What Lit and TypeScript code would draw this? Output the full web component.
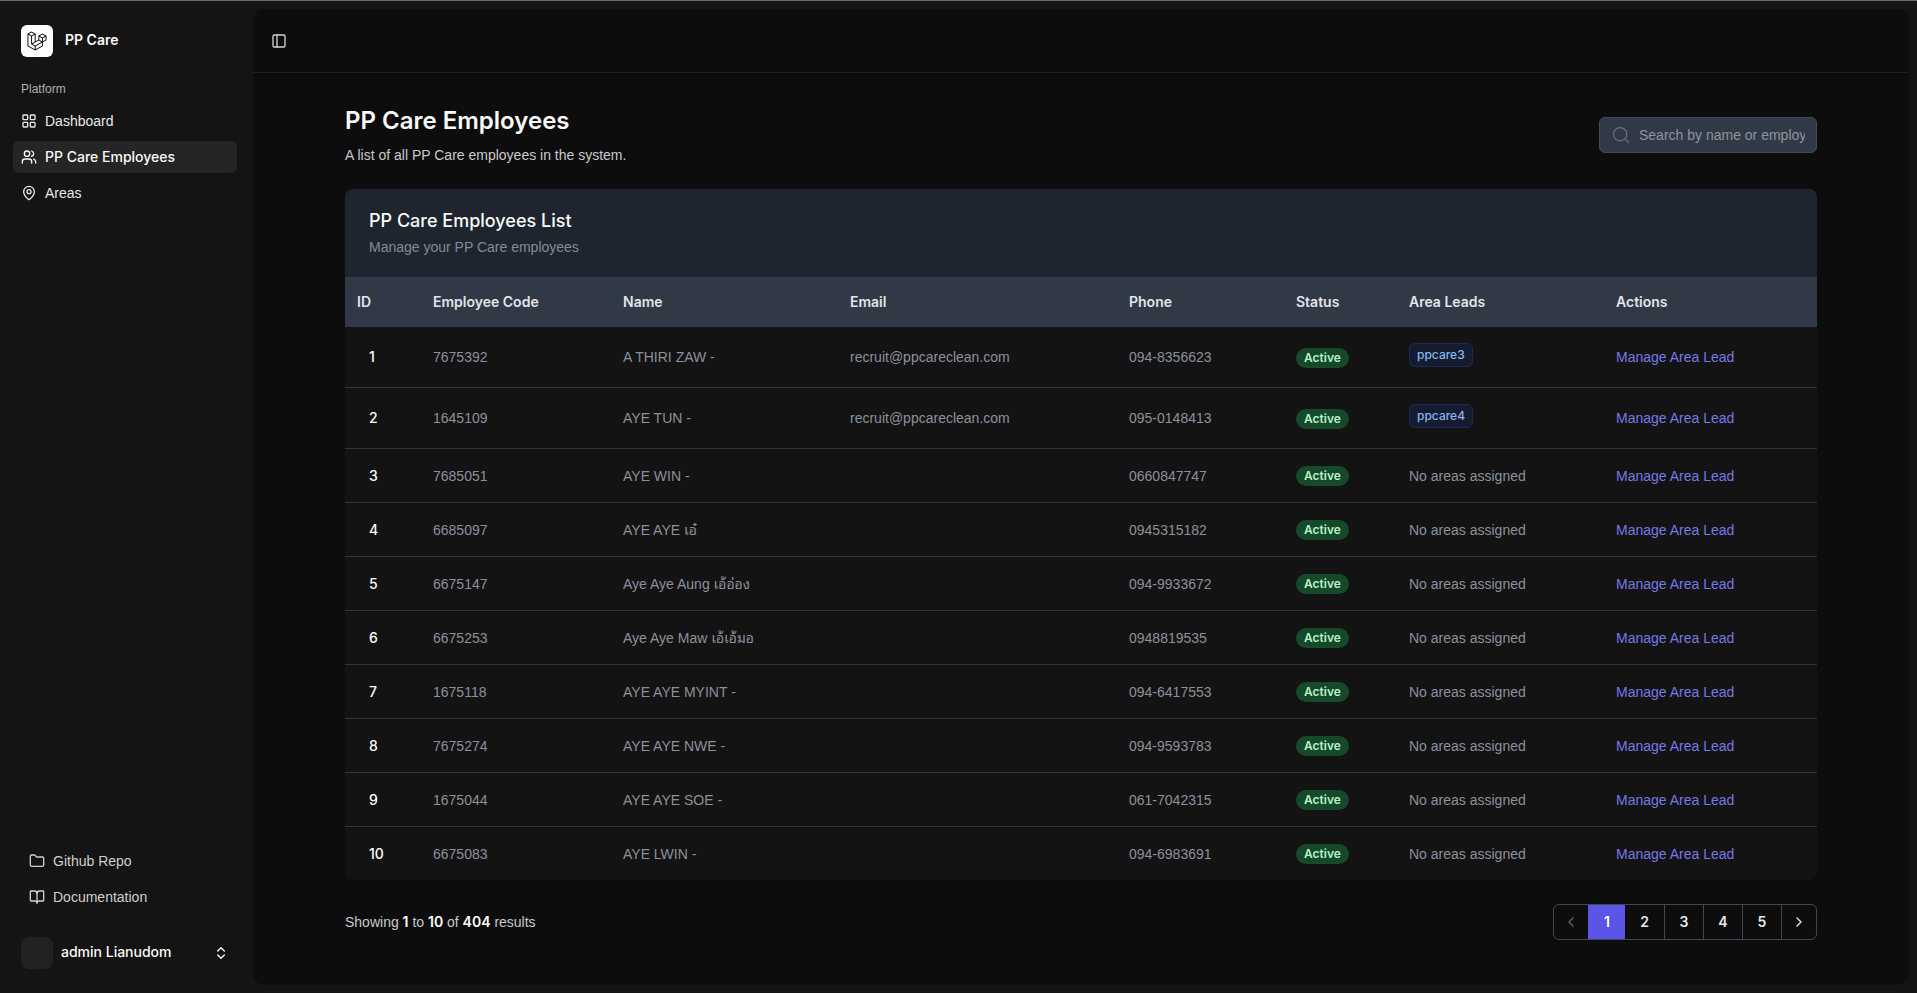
import { LitElement, html, css, svg } from "lit";
import { customElement, state } from "lit/decorators.js";
import { classMap } from "lit/directives/class-map.js";

interface Employee {
  id: number;
  code: string;
  name: string;
  email: string;
  phone: string;
  area: string;
}

const MAIL = "recruit@ppcareclean.com";

const EMPLOYEES: Employee[] = [
  { id: 1, code: "7675392", name: "A THIRI ZAW -", email: MAIL, phone: "094-8356623", area: "ppcare3" },
  { id: 2, code: "1645109", name: "AYE TUN -", email: MAIL, phone: "095-0148413", area: "ppcare4" },
  { id: 3, code: "7685051", name: "AYE WIN -", email: "", phone: "0660847747", area: "" },
  { id: 4, code: "6685097", name: "AYE AYE เอ๋", email: "", phone: "0945315182", area: "" },
  { id: 5, code: "6675147", name: "Aye Aye Aung เอ้อ่อง", email: "", phone: "094-9933672", area: "" },
  { id: 6, code: "6675253", name: "Aye Aye Maw เอ้เอ้มอ", email: "", phone: "0948819535", area: "" },
  { id: 7, code: "1675118", name: "AYE AYE MYINT -", email: "", phone: "094-6417553", area: "" },
  { id: 8, code: "7675274", name: "AYE AYE NWE -", email: "", phone: "094-9593783", area: "" },
  { id: 9, code: "1675044", name: "AYE AYE SOE -", email: "", phone: "061-7042315", area: "" },
  { id: 10, code: "6675083", name: "AYE LWIN -", email: "", phone: "094-6983691", area: "" },
];

const COLUMNS = ["ID", "Employee Code", "Name", "Email", "Phone", "Status", "Area Leads", "Actions"];

const ICONS = {
  grid: svg`<rect width="7" height="7" x="3" y="3" rx="1"/><rect width="7" height="7" x="14" y="3" rx="1"/><rect width="7" height="7" x="14" y="14" rx="1"/><rect width="7" height="7" x="3" y="14" rx="1"/>`,
  users: svg`<path d="M16 21v-2a4 4 0 0 0-4-4H6a4 4 0 0 0-4 4v2"/><circle cx="9" cy="7" r="4"/><path d="M22 21v-2a4 4 0 0 0-3-3.87"/><path d="M16 3.13a4 4 0 0 1 0 7.75"/>`,
  pin: svg`<path d="M20 10c0 4.993-5.539 10.193-7.399 11.799a1 1 0 0 1-1.202 0C9.539 20.193 4 14.993 4 10a8 8 0 0 1 16 0"/><circle cx="12" cy="10" r="3"/>`,
  folder: svg`<path d="M20 20a2 2 0 0 0 2-2V8a2 2 0 0 0-2-2h-7.9a2 2 0 0 1-1.69-.9L9.6 3.9A2 2 0 0 0 7.93 3H4a2 2 0 0 0-2 2v13a2 2 0 0 0 2 2Z"/>`,
  book: svg`<path d="M12 7v14"/><path d="M3 18a1 1 0 0 1-1-1V4a1 1 0 0 1 1-1h5a4 4 0 0 1 4 4 4 4 0 0 1 4-4h5a1 1 0 0 1 1 1v13a1 1 0 0 1-1 1h-6a3 3 0 0 0-3 3 3 3 0 0 0-3-3z"/>`,
  updown: svg`<path d="m7 15 5 5 5-5"/><path d="m7 9 5-5 5 5"/>`,
  panel: svg`<rect width="18" height="18" x="3" y="3" rx="2"/><path d="M9 3v18"/>`,
  search: svg`<circle cx="11" cy="11" r="8"/><path d="m21 21-4.3-4.3"/>`,
  left: svg`<path d="m15 18-6-6 6-6"/>`,
  right: svg`<path d="m9 18 6-6-6-6"/>`,
};

const icon = (name: keyof typeof ICONS) =>
  html`<svg class="icon" viewBox="0 0 24 24" aria-hidden="true">${ICONS[name]}</svg>`;

@customElement("app-root")
export class AppRoot extends LitElement {
  @state() private page = 1;
  @state() private query = "";

  static styles = css`
    :host {
      --strong: "Inter", sans-serif;
      display: flex;
      flex-direction: column;
      min-height: 100vh;
      box-sizing: border-box;
      border-top: 1px solid #5f7278;
      background: #141414;
      color: #fafafa;
      font-family: "Liberation Sans", "Noto Sans Thai Looped", "Loma", "Garuda", "Noto Sans Thai", sans-serif;
      font-size: 14px;
      line-height: 20px;
    }
    *, *::before, *::after { box-sizing: border-box; }
    h1, h2, p, ul { margin: 0; padding: 0; }
    a { color: inherit; text-decoration: none; }
    button { font: inherit; color: inherit; background: none; border: 0; padding: 0; cursor: pointer; }
    h1, h2, th, b, .brand, .current, .user, .id, .badge, .chip, .pager { font-family: var(--strong); }
    .icon {
      width: 16px; height: 16px; flex: none; display: block;
      fill: none; stroke: currentColor; stroke-width: 2;
      stroke-linecap: round; stroke-linejoin: round;
    }
    .shell { flex: 1; display: flex; }
    .sidebar {
      width: 253px; flex: none; padding: 8px 16px 8px 13px;
      display: flex; flex-direction: column;
    }
    .brand { display: flex; align-items: center; gap: 12px; padding: 8px; margin-top: 8px; font-weight: 600; }
    .logo {
      width: 32px; height: 32px; border-radius: 6px; background: #fff;
      display: grid; place-items: center;
    }
    .logo svg { width: 20px; height: 20px; display: block; fill: #0a0a0a; }
    .who { flex: 1; padding-bottom: 2px; }
    .label { padding: 8px; margin-top: 8px; font-size: 12px; line-height: 16px; color: #b0b0b0; }
    .nav { display: flex; flex-direction: column; gap: 4px; }
    .nav a { display: flex; align-items: center; gap: 8px; height: 32px; padding: 0 8px; border-radius: 6px; color: #e8e8e8; }
    .nav a.current { background: #252525; font-weight: 500; color: #fafafa; }
    .nav.extra { margin-top: auto; padding: 0 8px; }
    .nav.extra a { color: #cfcfcf; }
    .user { display: flex; align-items: center; gap: 8px; height: 48px; padding: 8px; margin: 16px 0 8px; font-weight: 500; text-align: left; }
    .avatar { width: 32px; height: 32px; border-radius: 8px; background: #222; }
    .main {
      flex: 1; min-width: 0; margin: 8px 8px 8px 0;
      background: #0d0d0d; border-radius: 12px;
    }
    .topbar { height: 64px; display: flex; align-items: center; padding: 0 12px; border-bottom: 1px solid #1e1e1e; }
    .toggle { width: 28px; height: 28px; display: grid; place-items: center; color: #d4d4d4; }
    .content { max-width: 1536px; margin: 0 auto; padding: 32px; }
    .heading { display: flex; align-items: center; justify-content: space-between; gap: 16px; }
    h1 { font-size: 24px; line-height: 32px; font-weight: 600; }
    .lead { margin-top: 8px; color: #c8cacd; }
    .search {
      display: flex; align-items: center; gap: 8px; width: 218px; height: 36px; padding: 0 11px;
      border: 1px solid #424c59; border-radius: 6px; background: #303945; color: #69727e;
    }
    .search .icon { width: 20px; height: 20px; stroke-width: 1.5; }
    .search input {
      flex: 1; min-width: 0; border: 0; padding: 0; outline: 0; background: none;
      font: inherit; color: #fff;
    }
    .search input::placeholder { color: #8d95a0; opacity: 1; }
    .card { margin-top: 24px; border-radius: 8px; overflow: hidden; background: #131313; }
    .card-head { padding: 20px 24px; height: 88px; background: #1e252e; }
    h2 { font-size: 18px; line-height: 24px; font-weight: 500; }
    .sub { margin-top: 4px; color: #848b96; }
    table { width: 100%; border-collapse: separate; border-spacing: 0; table-layout: fixed; }
    .c0 { width: 76px; } .c1 { width: 190px; } .c2 { width: 227px; } .c3 { width: 279px; }
    .c4 { width: 167px; } .c5 { width: 113px; } .c6 { width: 207px; } .c7 { width: 213px; }
    th { height: 50px; padding: 0 12px; text-align: left; font-weight: 600; color: #e2e5e9; background: #303945; }
    td { height: 54px; padding: 0 12px; color: #8b919c; white-space: nowrap; border-bottom: 1px solid #2d3744; }
    tr.tall td { height: 61px; }
    tr:last-child td { border-bottom: 0; height: 53px; }
    td.id { padding-left: 24px; color: #fff; font-weight: 500; }
    .badge {
      display: inline-block; vertical-align: middle; padding: 2px 8px; border-radius: 10px;
      background: #15492a; color: #b4f2c8; font-size: 12px; line-height: 16px; font-weight: 600;
    }
    .chip {
      display: inline-block; vertical-align: middle; margin-bottom: 4px; padding: 3px 7px;
      border: 1px solid #1b2a5a; border-radius: 6px; background: #151c30; color: #86b6ee;
      font-size: 12px; line-height: 16px; font-weight: 500;
    }
    .manage { color: #7679e6; }
    .foot { display: flex; align-items: center; justify-content: space-between; margin-top: 24px; color: #c8cacd; }
    .foot b { color: #fff; font-weight: 600; }
    .pager { display: flex; height: 36px; border: 1px solid #3f4855; border-radius: 6px; overflow: hidden; font-weight: 600; color: #e5e7eb; }
    .pager button { border-left: 1px solid #3f4855; display: grid; place-items: center; }
    .pager .step { width: 35px; }
    .pager .prev { width: 34px; border-left: 0; color: #5c636e; }
    .pager .num { width: 39px; }
    .pager .num.current { width: 37px; margin: -1px 0; background: #5a55e6; border-color: #5a55e6; color: #fff; }
    .pager .num.current + .num { border-left: 0; }
  `;

  private onSearch(e: Event) {
    this.query = (e.target as HTMLInputElement).value;
  }

  private get rows() {
    const q = this.query.trim().toLowerCase();
    return EMPLOYEES.filter((e) => !q || e.name.toLowerCase().includes(q) || e.code.includes(q));
  }

  private sidebar() {
    return html`
      <aside class="sidebar">
        <a class="brand" href="#home">
          <span class="logo">
            <svg viewBox="0 0 40 42" aria-hidden="true">
              <path fill-rule="evenodd" clip-rule="evenodd" d="M17.2 5.63325L8.6 0.855469L0 5.63325V32.1434L16.2 41.1434L32.4 32.1434V23.699L40 19.4767V9.85547L31.4 5.07769L22.8 9.85547V18.2999L17.2 21.411V5.63325ZM38 18.2999L32.4 21.411V15.2545L38 12.1434V18.2999ZM36.9409 10.4439L31.4 13.5221L25.8591 10.4439L31.4 7.36561L36.9409 10.4439ZM24.8 18.2999V12.1434L30.4 15.2545V21.411L24.8 18.2999ZM23.8 20.0323L29.3409 23.1105L16.2 30.411L10.6591 27.3328L23.8 20.0323ZM7.6 27.9212L15.2 32.1434V38.2999L2 30.9666V7.92116L7.6 11.0323V27.9212ZM8.6 9.29991L3.05913 6.22165L8.6 3.14339L14.1409 6.22165L8.6 9.29991ZM30.4 24.8101L17.2 32.1434V38.2999L30.4 30.9666V24.8101ZM9.6 11.0323L15.2 7.92117V22.5221L9.6 25.6333V11.0323Z"/>
            </svg>
          </span>
          <span class="who">PP Care</span>
        </a>
        <div class="label">Platform</div>
        <nav class="nav" aria-label="Platform">
          <a href="#dashboard">${icon("grid")}<span>Dashboard</span></a>
          <a class="current" href="#employees" aria-current="page">${icon("users")}<span>PP Care Employees</span></a>
          <a href="#areas">${icon("pin")}<span>Areas</span></a>
        </nav>
        <nav class="nav extra" aria-label="Resources">
          <a href="#repo">${icon("folder")}<span>Github Repo</span></a>
          <a href="#docs">${icon("book")}<span>Documentation</span></a>
        </nav>
        <button class="user" type="button">
          <span class="avatar"></span><span class="who">admin Lianudom</span>${icon("updown")}
        </button>
      </aside>
    `;
  }

  private row(e: Employee) {
    return html`
      <tr class=${classMap({ tall: e.area !== "" })}>
        <td class="id">${e.id}</td>
        <td>${e.code}</td>
        <td>${e.name}</td>
        <td>${e.email}</td>
        <td>${e.phone}</td>
        <td><span class="badge">Active</span></td>
        <td>${e.area ? html`<span class="chip">${e.area}</span>` : "No areas assigned"}</td>
        <td><a class="manage" href="#lead">Manage Area Lead</a></td>
      </tr>
    `;
  }

  render() {
    return html`
      <div class="shell">
        ${this.sidebar()}
        <main class="main">
          <header class="topbar">
            <button class="toggle" type="button" aria-label="Toggle sidebar">${icon("panel")}</button>
          </header>
          <div class="content">
            <div class="heading">
              <div>
                <h1>PP Care Employees</h1>
                <p class="lead">A list of all PP Care employees in the system.</p>
              </div>
              <label class="search">
                ${icon("search")}
                <input type="text" aria-label="Search employees" placeholder="Search by name or employee code" .value=${this.query} @input=${this.onSearch} />
              </label>
            </div>
            <section class="card">
              <div class="card-head">
                <h2>PP Care Employees List</h2>
                <p class="sub">Manage your PP Care employees</p>
              </div>
              <table>
                <colgroup>${COLUMNS.map((_, i) => html`<col class="c${i}" />`)}</colgroup>
                <thead><tr>${COLUMNS.map((c) => html`<th scope="col">${c}</th>`)}</tr></thead>
                <tbody>${this.rows.map((e) => this.row(e))}</tbody>
              </table>
            </section>
            <div class="foot">
              <p>Showing <b>1</b> to <b>10</b> of <b>404</b> results</p>
              <nav class="pager" aria-label="Pagination">
                <button class="step prev" type="button" aria-label="Previous">${icon("left")}</button>
                ${[1, 2, 3, 4, 5].map((n) => html`<button type="button"
                  class=${classMap({ num: true, current: n === this.page })}
                  @click=${() => (this.page = n)}>${n}</button>`)}
                <button class="step" type="button" aria-label="Next">${icon("right")}</button>
              </nav>
            </div>
          </div>
        </main>
      </div>
    `;
  }
}
